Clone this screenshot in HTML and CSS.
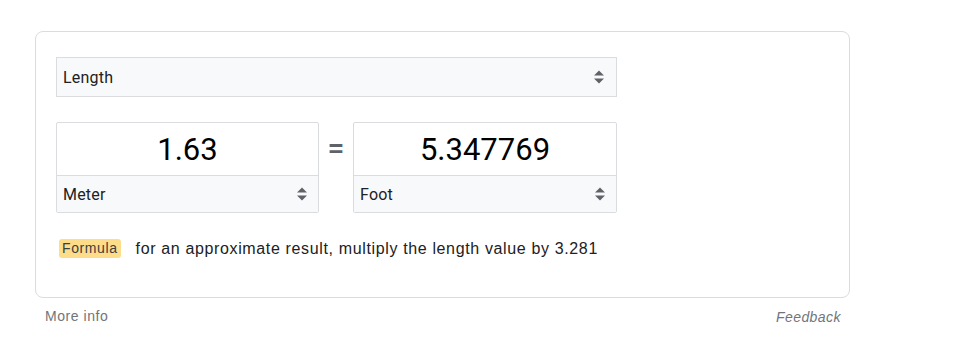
FILE: index.html
```html
<!DOCTYPE html>
<html>
<head>
<meta charset="utf-8">
<link rel="stylesheet" href="styles.css">
</head>
<body>
<div class="wrap">
  <div class="card">
    <div class="select wide">
      <span>Length</span>
      <svg class="arr" width="10" height="14" viewBox="0 0 10 14"><path d="M5 0.5 L10 5.5 H0 Z M0 8.5 H10 L5 13.5 Z" fill="#5f6368"/></svg>
    </div>
    <div class="conv">
      <div class="box">
        <div class="num">1.63</div>
        <div class="select unit">
          <span>Meter</span>
          <svg class="arr" width="10" height="14" viewBox="0 0 10 14"><path d="M5 0.5 L10 5.5 H0 Z M0 8.5 H10 L5 13.5 Z" fill="#5f6368"/></svg>
        </div>
      </div>
      <div class="eq">=</div>
      <div class="box">
        <div class="num">5.347769</div>
        <div class="select unit">
          <span>Foot</span>
          <svg class="arr" width="10" height="14" viewBox="0 0 10 14"><path d="M5 0.5 L10 5.5 H0 Z M0 8.5 H10 L5 13.5 Z" fill="#5f6368"/></svg>
        </div>
      </div>
    </div>
    <div class="formula">
      <span class="badge">Formula</span>
      <span class="ftext">for an approximate result, multiply the length value by 3.281</span>
    </div>
  </div>
  <div class="footer">
    <span class="more">More info</span>
    <span class="fb">Feedback</span>
  </div>
</div>
</body>
</html>
```

FILE: styles.css
```css
html, body {
  margin: 0;
  padding: 0;
  background: #fff;
}
.wrap {
  width: 815px;
  margin-left: 35px;
  padding-top: 31px;
}
.card {
  box-sizing: border-box;
  width: 815px;
  height: 267px;
  border: 1px solid #dadce0;
  border-radius: 8px;
  padding: 25px 0 0 20px;
}
.select {
  box-sizing: border-box;
  display: flex;
  align-items: center;
  justify-content: space-between;
  background: #f8f9fa;
  border: 1px solid #dadce0;
  font-family: Roboto, "Noto Sans", sans-serif;
  font-size: 16px;
  letter-spacing: 0.2px;
  color: #202124;
  padding: 0 12px 0 6px;
}
.wide {
  width: 561px;
  height: 40px;
}
.arr {
  display: block;
}
.conv {
  display: flex;
  margin-top: 25px;
}
.box {
  box-sizing: border-box;
  width: 263px;
  height: 91px;
  border: 1px solid #dadce0;
  border-radius: 2px;
  display: flex;
  flex-direction: column;
}
.box + .eq + .box {
  width: 264px;
}
.num {
  height: 52px;
  display: flex;
  align-items: center;
  justify-content: center;
  font-family: Roboto, "Noto Sans", sans-serif;
  font-size: 31px;
  color: #000;
  padding-top: 1px;
  box-sizing: border-box;
}
.unit {
  flex: 1;
  border: none;
  border-top: 1px solid #dadce0;
  padding-right: 11px;
  padding-left: 6px;
}
.eq {
  width: 34px;
  text-align: center;
  font-family: Roboto, "Noto Sans", sans-serif;
  font-size: 30px;
  font-weight: 500;
  color: #5f6368;
  padding-top: 8px;
}
.formula {
  display: flex;
  align-items: center;
  margin-top: 26px;
  margin-left: 3px;
}
.badge {
  background: #fedd8a;
  border-radius: 3px;
  font-family: Arial, "Liberation Sans", sans-serif;
  font-size: 14px;
  letter-spacing: 0.6px;
  color: #3c4043;
  padding: 1px 3px 1px 3px;
  line-height: 17px;
}
.ftext {
  font-family: Arial, "Liberation Sans", sans-serif;
  font-size: 16px;
  letter-spacing: 0.64px;
  color: #202124;
  margin-left: 15px;
}
.footer {
  display: flex;
  justify-content: space-between;
  padding: 10px 9px 0 10px;
  font-family: Arial, "Liberation Sans", sans-serif;
  font-size: 14px;
  color: #70757a;
}
.more {
  letter-spacing: 0.55px;
}
.fb {
  font-style: italic;
  letter-spacing: 0.45px;
  padding-top: 1px;
}
```
